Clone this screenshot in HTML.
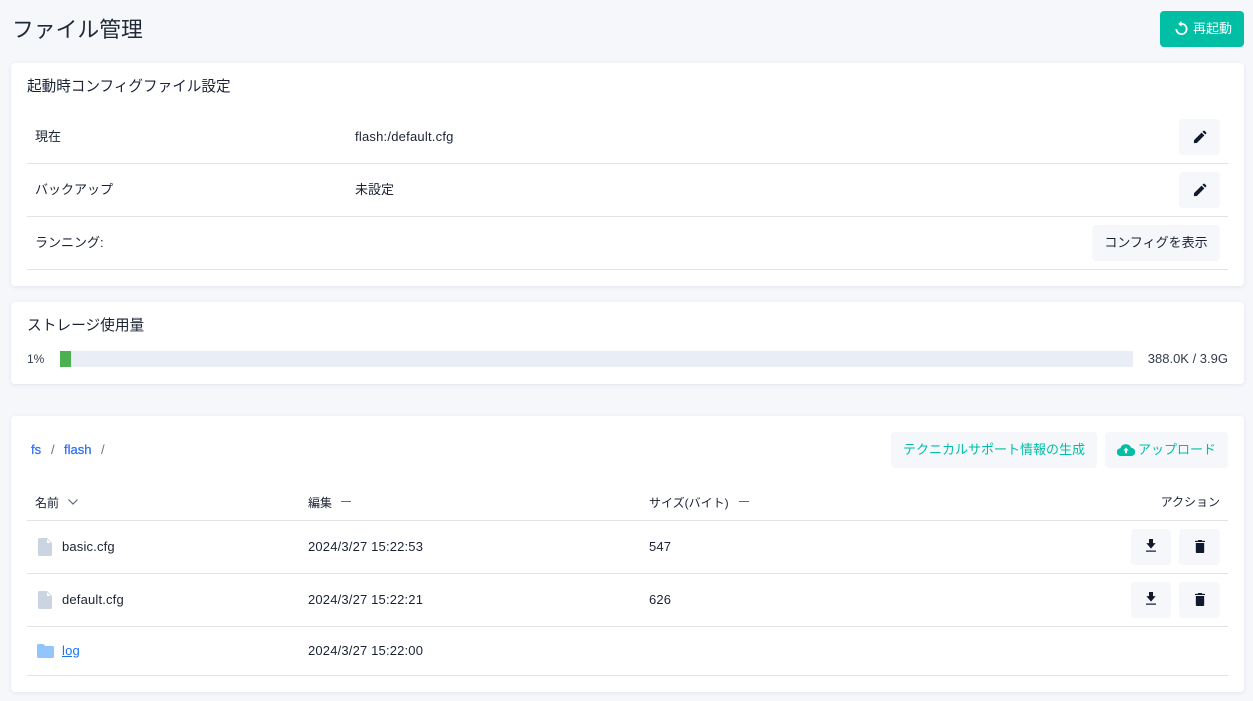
<!DOCTYPE html>
<html lang="ja">
<head>
<meta charset="utf-8">
<title>ファイル管理</title>
<style>
html,body{margin:0;padding:0;width:1253px;height:701px;overflow:hidden;background:#f5f7fb}
body{position:relative;font-family:"Liberation Sans","Noto Sans CJK JP",sans-serif;font-size:13px;color:#1a2233}
.t{position:absolute;white-space:nowrap;line-height:18px}
.card{position:absolute;left:11px;width:1233px;background:#fff;border-radius:4px;box-shadow:0 1px 4px rgba(40,60,110,.09)}
.line{position:absolute;left:27px;width:1201px;height:1px;background:#e1e3e8}
.btn{position:absolute;height:36px;background:#f5f7fb;border-radius:4px;line-height:36px;text-align:center;white-space:nowrap}
.ico{position:absolute}
.h{font-size:14.6px;color:#1a2233}
.g{color:#00bfa5;font-size:13px}
.l{letter-spacing:.17px}
.th{font-size:12px}
.b{color:#2f6ff5;-webkit-text-stroke:.25px #2f6ff5}
a{color:#1a73f5}
</style>
</head>
<body>
<div class="t" style="left:12px;top:16px;font-size:21.8px;line-height:28px;color:#1f2937">ファイル管理</div>
<div class="btn" style="left:1160px;top:11px;width:84px;background:#00bfa5;color:#fff;font-size:13px;text-indent:33px;text-align:left;">再起動</div>
<svg class="ico" style="left:1174px;top:20px" width="15" height="17" viewBox="0 0 16 18"><path d="M8 1 L4.4 4 L8 7 Z" fill="#fff"/><path d="M7 4 H8 A5.5 5.5 0 1 1 2.5 9.5" fill="none" stroke="#fff" stroke-width="1.9"/></svg>

<div class="card" style="top:63px;height:223px"></div>
<div class="t h" style="left:27px;top:78px">起動時コンフィグファイル設定</div>
<div class="t" style="left:35px;top:128px">現在</div>
<div class="t l" style="left:355px;top:128px;letter-spacing:.22px">flash:/default.cfg</div>
<div class="btn" style="left:1179px;top:119px;width:41px"></div>
<svg class="ico" style="left:1193px;top:130px" width="14" height="14" viewBox="0 0 16 16"><path d="M1 15 L1.2 11.6 L9.8 3 L13 6.2 L4.4 14.8 Z M10.8 2 L12 .9 Q12.6 .4 13.2 .9 L15.1 2.8 Q15.6 3.4 15.1 4 L14 5.2 Z" fill="#111a2e"/></svg>
<div class="line" style="top:163px"></div>
<div class="t" style="left:35px;top:181px">バックアップ</div>
<div class="t" style="left:355px;top:181px">未設定</div>
<div class="btn" style="left:1179px;top:172px;width:41px"></div>
<svg class="ico" style="left:1193px;top:183px" width="14" height="14" viewBox="0 0 16 16"><path d="M1 15 L1.2 11.6 L9.8 3 L13 6.2 L4.4 14.8 Z M10.8 2 L12 .9 Q12.6 .4 13.2 .9 L15.1 2.8 Q15.6 3.4 15.1 4 L14 5.2 Z" fill="#111a2e"/></svg>
<div class="line" style="top:216px"></div>
<div class="t" style="left:35px;top:234px">ランニング:</div>
<div class="btn" style="left:1092px;top:225px;width:128px;font-size:13px">コンフィグを表示</div>
<div class="line" style="top:269px"></div>

<div class="card" style="top:302px;height:82px"></div>
<div class="t h" style="left:27px;top:317px;font-size:14.7px">ストレージ使用量</div>
<div class="t" style="left:27px;top:350px;font-size:12px;color:#333b4a">1%</div>
<div class="ico" style="left:60px;top:351px;width:1073px;height:16px;background:#e9edf5"></div>
<div class="ico" style="left:60px;top:351px;width:11px;height:16px;background:#4caf50"></div>
<div class="t" style="right:25px;top:350px;font-size:13px;color:#333b4a">388.0K / 3.9G</div>

<div class="card" style="top:416px;height:276px"></div>
<div class="t b" style="left:31px;top:441px">fs</div>
<div class="t" style="left:51px;top:441px;color:#6b7280">/</div>
<div class="t b" style="left:64px;top:441px">flash</div>
<div class="t" style="left:101px;top:441px;color:#6b7280">/</div>
<div class="btn g" style="left:891px;top:432px;width:206px">テクニカルサポート情報の生成</div>
<div class="btn g" style="left:1105px;top:432px;width:123px;text-align:left;text-indent:33px">アップロード</div>
<svg class="ico" style="left:1117px;top:443px" width="18" height="13" viewBox="0 0 18 13"><path d="M4 13 A3.9 3.9 0 0 1 3.4 5.2 A5.8 5.8 0 0 1 14.2 4.8 A4.1 4.1 0 0 1 14 13 Z" fill="#00bfa5"/><path d="M9 4.5 L11.6 7.5 H10 V10.2 H8 V7.5 H6.4 Z" fill="#fff"/></svg>

<div class="t th" style="left:35px;top:494px">名前</div>
<svg class="ico" style="left:67px;top:497px" width="12" height="10" viewBox="0 0 12 10"><path d="M1.5 2.5 L6 7 L10.5 2.5" fill="none" stroke="#5f6b80" stroke-width="1.2"/></svg>
<div class="t th" style="left:308px;top:494px">編集</div>
<div class="ico" style="left:341px;top:501px;width:10px;height:1px;background:#5f6b80"></div>
<div class="t th" style="left:649px;top:494px">サイズ(バイト)</div>
<div class="ico" style="left:739px;top:501px;width:10px;height:1px;background:#5f6b80"></div>
<div class="t th" style="right:33px;top:493px">アクション</div>
<div class="line" style="top:520px"></div>

<svg class="ico" style="left:38px;top:538px" width="14" height="18" viewBox="0 0 14 18"><path d="M1.5 0 H9 L14 5 V16.5 Q14 18 12.5 18 H1.5 Q0 18 0 16.5 V1.5 Q0 0 1.5 0 Z" fill="#cbd5e1"/><path d="M9 1.2 V5 H12.8 Z" fill="#fff"/></svg>
<div class="t l" style="left:62px;top:538px">basic.cfg</div>
<div class="t l" style="left:308px;top:538px">2024/3/27 15:22:53</div>
<div class="t l" style="left:649px;top:538px">547</div>
<div class="btn" style="left:1131px;top:529px;width:40px"></div>
<svg class="ico" style="left:1146px;top:539px" width="10" height="13" viewBox="0 0 12 14" preserveAspectRatio="none"><path d="M3.6 0 H8.4 V4.4 H11.6 L6 10.4 L.4 4.4 H3.6 Z" fill="#111a2e"/><rect x="0" y="12.4" width="12" height="1.3" fill="#111a2e"/></svg>
<div class="btn" style="left:1179px;top:529px;width:41px"></div>
<svg class="ico" style="left:1195px;top:540px" width="10" height="13" viewBox="0 0 12 14" preserveAspectRatio="none"><path d="M4 0 H8 L8.8 1 H12 V2.2 H0 V1 H3.2 Z M1 3.2 H11 V12.6 Q11 14 9.6 14 H2.4 Q1 14 1 12.6 Z" fill="#111a2e"/></svg>
<div class="line" style="top:573px"></div>

<svg class="ico" style="left:38px;top:591px" width="14" height="18" viewBox="0 0 14 18"><path d="M1.5 0 H9 L14 5 V16.5 Q14 18 12.5 18 H1.5 Q0 18 0 16.5 V1.5 Q0 0 1.5 0 Z" fill="#cbd5e1"/><path d="M9 1.2 V5 H12.8 Z" fill="#fff"/></svg>
<div class="t l" style="left:62px;top:591px">default.cfg</div>
<div class="t l" style="left:308px;top:591px">2024/3/27 15:22:21</div>
<div class="t l" style="left:649px;top:591px">626</div>
<div class="btn" style="left:1131px;top:582px;width:40px"></div>
<svg class="ico" style="left:1146px;top:592px" width="10" height="13" viewBox="0 0 12 14" preserveAspectRatio="none"><path d="M3.6 0 H8.4 V4.4 H11.6 L6 10.4 L.4 4.4 H3.6 Z" fill="#111a2e"/><rect x="0" y="12.4" width="12" height="1.3" fill="#111a2e"/></svg>
<div class="btn" style="left:1179px;top:582px;width:41px"></div>
<svg class="ico" style="left:1195px;top:593px" width="10" height="13" viewBox="0 0 12 14" preserveAspectRatio="none"><path d="M4 0 H8 L8.8 1 H12 V2.2 H0 V1 H3.2 Z M1 3.2 H11 V12.6 Q11 14 9.6 14 H2.4 Q1 14 1 12.6 Z" fill="#111a2e"/></svg>
<div class="line" style="top:626px"></div>

<svg class="ico" style="left:37px;top:644px" width="17" height="14" viewBox="0 0 17 14"><path d="M1.5 0 H6.5 L8.3 2 H15.5 Q17 2 17 3.5 V12.5 Q17 14 15.5 14 H1.5 Q0 14 0 12.5 V1.5 Q0 0 1.5 0 Z" fill="#93c5fd"/></svg>
<div class="t" style="left:62px;top:642px;letter-spacing:.2px"><a href="#" style="color:#1a73f5">log</a></div>
<div class="t l" style="left:308px;top:642px">2024/3/27 15:22:00</div>
<div class="line" style="top:675px"></div>
</body>
</html>
